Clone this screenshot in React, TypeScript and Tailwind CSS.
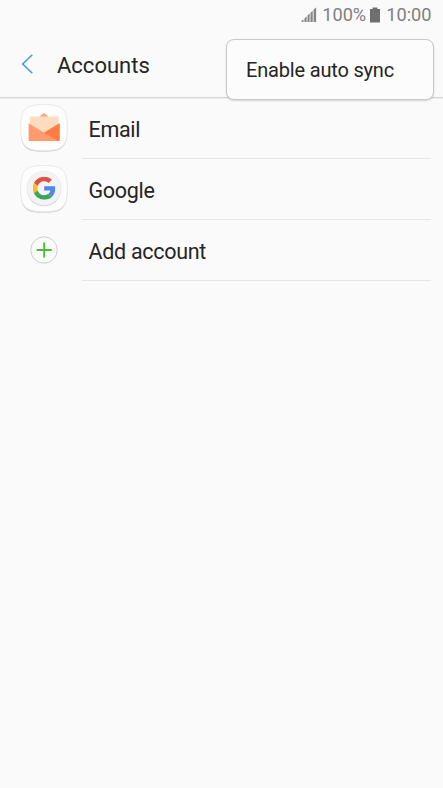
import React from 'react';

const SignalIcon = () => (
  <svg width="16" height="16" viewBox="0 0 16 16" fill="#858585">
    <path d="M0.5 15v-1.2l2-1.2V15z" />
    <path d="M3.4 15v-3.6l2.2-2V15z" />
    <path d="M6.5 15V8.4l2.1-2V15z" />
    <path d="M9.5 15V5.8l2.2-2V15z" />
    <path d="M12.6 15V2.6l2.5-2.2V15z" />
  </svg>
);

const BatteryIcon = () => (
  <svg width="10" height="16" viewBox="0 0 10 16" fill="#6f6f6f">
    <path d="M0 2h2.6V0.5h4.8V2H10v13.4H0z" />
  </svg>
);

const IconTile = ({ children }: { children: React.ReactNode }) => (
  <svg width="50" height="50" viewBox="0 0 50 50">
    <path
      d="M25 2.6C43.5 2.6 48.3 7 48.3 25.7S43.5 48.8 25 48.8 1.7 45 1.7 25.7 6.5 2.6 25 2.6z"
      fill="#d2d2d2"
    />
    <path
      d="M25 1.5C43.5 1.5 48.3 6 48.3 24.6S43.5 47.7 25 47.7 1.7 43.2 1.7 24.6 6.5 1.5 25 1.5z"
      fill="#fdfdfd"
      stroke="#e6e6e6"
      strokeWidth="0.9"
    />
    {children}
  </svg>
);

const EmailIcon = () => (
  <IconTile>
    <path d="M19.5 14.5l4.5-4q1-.7 2 0l4.5 4z" fill="#f7a884" />
    <path d="M11 13.500h28.500V34H11z" fill="#ffdcc0" />
    <path d="M9.6 20.3L25 29.7 40.600 20.300V36.800q0 1.200-1.200 1.200H10.800q-1.200 0-1.200-1.200z" fill="#ff9a6c" />
    <path d="M25 29.700L40.600 20.300V36.800q0 1.200-1.200 1.200z" fill="#ff7d42" />
  </IconTile>
);

const GoogleIcon = () => (
  <IconTile>
    <circle cx="25" cy="25" r="17.2" fill="#cccccc" />
    <circle cx="25" cy="24.2" r="17.2" fill="#f3f3f3" stroke="#e6e6e6" strokeWidth="0.5" />
    <svg x="13.7" y="12.7" width="23" height="23" viewBox="0 0 48 48">
      <path fill="#DF5146" d="M24 0c6.470 0 11.900 2.380 16.060 6.250l-6.850 6.850C30.710 10.720 27.540 9.500 24 9.500c-6.260 0-11.570 4.220-13.460 9.910l-7.980-6.190C6.510 5.380 14.620 0 24 0z" />
      <path fill="#4F87EE" d="M46.980 24.550c0-1.570-.15-3.090-.38-4.550H24v9.020h12.940c-.58 2.960-2.260 5.480-4.780 7.180l7.730 6c4.510-4.180 7.090-10.360 7.090-17.650z" />
      <path fill="#F8BD25" d="M10.530 28.590c-.48-1.450-.76-2.990-.76-4.590s.27-3.140.76-4.590l-7.980-6.190C.92 16.460 0 20.120 0 24c0 3.880.92 7.540 2.560 10.780l7.970-6.190z" />
      <path fill="#3FA45B" d="M24 48c6.480 0 11.930-2.130 15.890-5.810l-7.730-6c-2.150 1.450-4.920 2.300-8.160 2.300-6.260 0-11.570-4.220-13.470-9.910l-7.980 6.190C6.510 42.620 14.620 48 24 48z" />
    </svg>
  </IconTile>
);

const AddIcon = () => (
  <svg width="50" height="50" viewBox="0 0 50 50" fill="none">
    <circle cx="25" cy="25" r="13.2" fill="#fbfbfb" stroke="#cfcfcf" strokeWidth="1" />
    <path d="M17.7 25h15M25.2 17.5v15" stroke="#49be35" strokeWidth="1.9" />
  </svg>
);

const accounts = [
  { label: 'Email', icon: <EmailIcon /> },
  { label: 'Google', icon: <GoogleIcon /> },
  { label: 'Add account', icon: <AddIcon /> },
];

const App: React.FC = () => {
  return (
    <div className="relative h-[788px] w-[443px] overflow-hidden bg-[#fafafa] font-['Roboto',sans-serif] text-[#252525]">
      <div className="flex h-[30px] items-center justify-end pr-[11.5px] text-[18.2px] leading-[30px] text-[#808080]">
        <SignalIcon />
        <span className="ml-[5px]">100%</span>
        <span className="ml-1 mr-[6px]">
          <BatteryIcon />
        </span>
        <span>10:00</span>
      </div>

      <header className="flex h-[68px] items-center border-b border-[#d6d6d6] pl-[21px] shadow-[0_1px_0_#eeeeee]">
        <button type="button" aria-label="Back">
          <svg width="13" height="20" viewBox="0 0 13 20" fill="none" stroke="#4b9fc4" strokeWidth="1.6">
            <path d="M11.3 0.7L1.7 10l9.6 9.3" />
          </svg>
        </button>
        <h1 className="ml-[23px] pt-[4px] text-[22px] leading-7">Accounts</h1>
      </header>

      <ul>
        {accounts.map((account) => (
          <li key={account.label} className="flex h-[61px] pl-[19px]">
            <div className="flex w-[63px] items-start pt-[5px]">{account.icon}</div>
            <div className="mr-[12px] flex flex-1 items-center border-b border-[#e6e6e6] pl-[6.5px] pt-[4px] text-[21.5px] tracking-[-0.014em]">
              {account.label}
            </div>
          </li>
        ))}
      </ul>

      {/* Overflow menu */}
      <div className="absolute left-[226px] top-[39px] flex h-[61px] w-[208px] items-center rounded-lg border border-[#c9c9c9] bg-[#fcfcfc] pl-[19px] pt-px text-[20px] tracking-[-0.009em] shadow-[0_1px_2px_rgba(0,0,0,0.15)]">
        Enable auto sync
      </div>
    </div>
  );
};

export default App;
